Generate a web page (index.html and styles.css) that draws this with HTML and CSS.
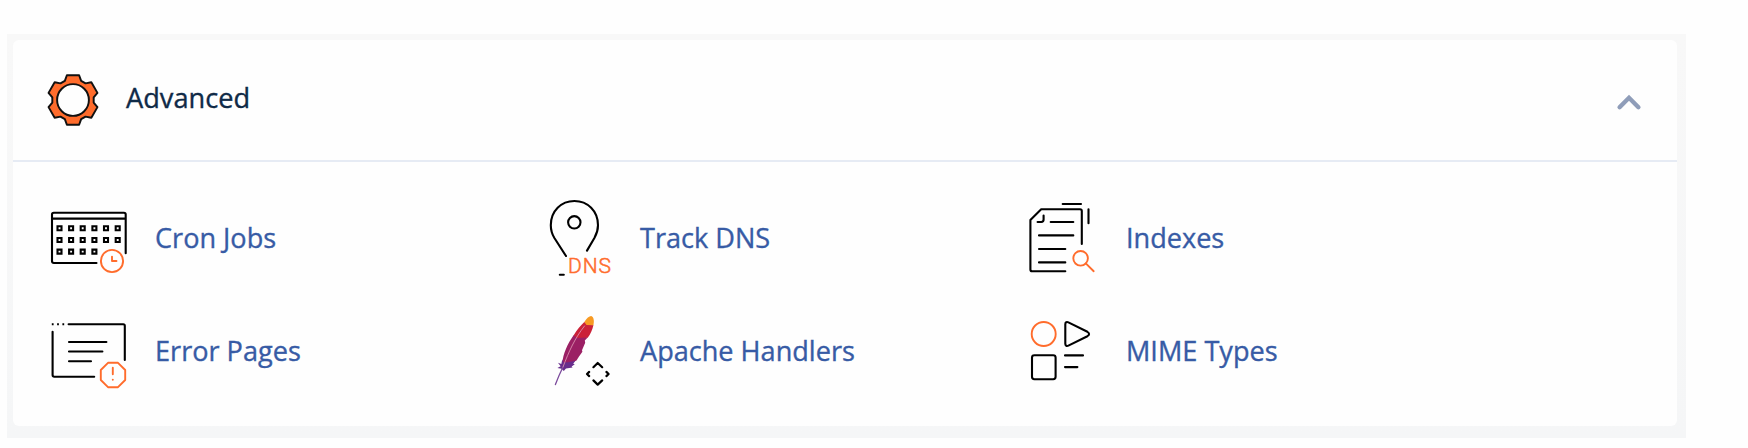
FILE: index.html
```html
<!doctype html>
<html lang="en">

<head>
  <meta charset="utf-8">
  <meta name="viewport" content="width=device-width, initial-scale=1">
  <title>Advanced</title>
  <link rel="stylesheet" href="styles.css">
</head>

<body>
  <div class="wrap">
    <div class="panel">
      <div class="panel-header">
        <svg class="gear" viewBox="-26.5 -26.5 53 53">
          <path d="M-8-18.8L-6-24.3H6L8-18.8L12.3-16.3L18-17.4L24-7L20.3-2.5V2.5L24 7L18 17.4L12.3 16.3L8 18.8L6 24.3H-6L-8 18.8L-12.3 16.3L-18 17.4L-24 7L-20.3 2.5V-2.5L-24-7L-18-17.4L-12.3-16.3Z" />
          <circle r="15.6" />
        </svg>
        <h2>Advanced</h2>
        <svg class="chevron" viewBox="0 0 26 18">
          <path d="M3.6 14.2L13 4.8L22.4 14.2" />
        </svg>
      </div>
      <div class="items">
        <a class="item">
          <svg class="icon" viewBox="0 0 90 90">
            <path d="M80.7 59.3V20.5Q80.7 18.7 78.9 18.7H8.8Q7 18.7 7 20.5V67Q7 69 9 69H51.5M7 24.6H80.7" />
            <g class="days">
              <path d="M12.5 32.3h4v4h-4zM24.1 32.3h4v4h-4zM35.7 32.3h4v4h-4zM47.4 32.3h4v4h-4zM59 32.3h4v4h-4zM70.7 32.3h4v4h-4z" />
              <path d="M12.5 44h4v4h-4zM24.1 44h4v4h-4zM35.7 44h4v4h-4zM47.4 44h4v4h-4zM59 44h4v4h-4zM70.7 44h4v4h-4z" />
              <path d="M12.5 55.6h4v4h-4zM24.1 55.6h4v4h-4zM35.7 55.6h4v4h-4zM47.4 55.6h4v4h-4z" />
            </g>
            <g class="orange">
              <circle cx="67" cy="67" r="11.1" />
              <path d="M67 62.6V67H71.5" />
            </g>
          </svg>
          <span>Cron Jobs</span>
        </a>
        <a class="item">
          <svg class="icon" viewBox="0 0 90 90">
            <path d="M36 62L24.4 44C22 40 20.8 36 20.8 31.2C20.8 17 31.2 7 44.4 7S68 17 68 31.2C68 36 66.6 40 64.4 44L57 56.6M29.8 80.8H33.8" />
            <circle cx="44.3" cy="28.3" r="6.2" />
            <text x="38" y="78.6" textLength="43">DNS</text>
          </svg>
          <span>Track DNS</span>
        </a>
        <a class="item">
          <svg class="icon" viewBox="0 0 90 90">
            <path d="M46.7 10H65M72.5 15.3V29.3M65.8 50V17Q65.8 15.3 64 15.3H25.2L14.4 26V75.5Q14.4 77.3 16.2 77.3H49.3" />
            <path d="M21.6 28H25.3Q27.6 28 27.6 25.6V21.6M34.7 28H57.3M23 41.4H57.3M23 55H49.3M23 68.4H49.3" />
            <g class="orange">
              <circle cx="64.6" cy="64.3" r="7.3" />
              <path d="M69.8 69.4L77.7 77.2" />
            </g>
          </svg>
          <span>Indexes</span>
        </a>
        <a class="item">
          <svg class="icon" viewBox="0 0 90 90">
            <path class="dots" d="M6.8 17.2h1.8M12.1 17.2h1.8M17.4 17.2h1.8" />
            <path d="M23.6 17.2H78.3Q79.8 17.2 79.8 18.8V53M7.6 24.8V68Q7.6 69.7 9.3 69.7H49.2" />
            <path d="M24 35H61.4M24 44.5H57.4M24 54.3H46" />
            <g class="orange">
              <path d="M63 55.8H73L80.2 63V73L73 80.2H63L55.8 73V63ZM67.8 60.8V67.2M67.8 72.6V72.7" />
            </g>
          </svg>
          <span>Error Pages</span>
        </a>
        <a class="item">
          <svg class="icon" viewBox="0 0 90 90">
            <g class="feather">
              <path fill="#f79a23" d="M54.3 15C56.8 11 60 8.6 61.6 9.2C64 10.4 64.2 14 63.4 18.4L55.6 19.4Z" />
              <path fill="#cb2138" d="M54.3 15L56.5 18L63.4 18.2C62.5 22.5 60.5 27 57.7 30.8L46 32L43.7 28.2C47 22.8 50.8 18.4 54.3 15Z" />
              <path fill="#9b2064" d="M43.7 28L47 31L57.7 30.4L54.8 33.4L55.2 35.8L52 43.2L52.4 44.8L49 49.4L46.5 53.5L38 57.5L32.3 56.5C33 46.5 37.5 37 43.7 28Z" />
              <path fill="#682d8c" d="M32.3 52.4L33.6 55.5L38 55.2L45.4 53.8L43.2 56.7L44.8 57.2L41.6 59.4L42.6 60.5L36 61.6L33.8 64L31.5 61.8L27.4 61L30.6 59.2L28 55.8L31.3 57Z" />
              <path class="quill" d="M25.4 77.6Q29 68 33 60" />
              <path class="vein" d="M33 60C39 44 45 31 54.5 19" />
            </g>
            <path class="arrows" d="M63.4 60.2L67.7 56L72.2 60.2M63.4 73.4L67.7 77.6L72.2 73.4M59.2 64.9L57 67L59.2 69.1M76.4 64.9L78.6 67L76.4 69.1" />
          </svg>
          <span>Apache Handlers</span>
        </a>
        <a class="item">
          <svg class="icon" viewBox="0 0 90 90">
            <circle class="orange" cx="27.7" cy="27" r="12" />
            <path d="M49.3 17.2C49.3 15.2 50.8 14.6 52.4 15.4L71.4 24.8C73.6 26 73.6 28 71.4 29.2L52.4 38.6C50.8 39.4 49.3 38.8 49.3 36.8Z" />
            <rect x="16" y="48.2" width="23.6" height="24" rx="2.4" />
            <path d="M49 48.4H67M49 60.1H61.4" />
          </svg>
          <span>MIME Types</span>
        </a>
      </div>
    </div>
  </div>
</body>

</html>
```

FILE: styles.css
```css
body {
  margin: 0;
  padding: 34px 0 0 7px;
  background: #fefefe;
  font: 27.1px "Open Sans", "Noto Sans", sans-serif;
  -webkit-text-stroke: .35px;
}

.wrap {
  box-sizing: border-box;
  width: 1679px;
  height: 404px;
  padding: 6px 9px 12px 6px;
  background: linear-gradient(#f8f8f8, #f5f6f7);
}

.panel {
  height: 386px;
  border-radius: 6px;
  background: #fefefe;
}

.panel-header {
  display: flex;
  align-items: center;
  box-sizing: border-box;
  height: 122px;
  padding: 0 35px 0 33px;
  border-bottom: 2px solid #e6ebf4;
}

.panel-header h2 {
  flex: 1;
  margin: 0 0 6px 26px;
  color: #0f2a47;
  font-size: 27.2px;
  font-weight: 400;
}

.gear {
  width: 54px;
  height: 54px;
  fill: #ff6c2c;
  stroke: #111;
  stroke-width: 1.9;
  stroke-linejoin: round;
}

.gear circle {
  fill: #fefefe;
}

.chevron {
  width: 26px;
  height: 18px;
  margin-top: 4px;
  fill: none;
  stroke: #8f9db9;
  stroke-width: 4.4;
  stroke-linecap: round;
}

/* three columns of tools */
.items {
  display: grid;
  grid-template-columns: 485px 486px 485px;
  grid-auto-rows: 90px;
  row-gap: 23px;
  padding: 32px 0 0 32px;
}

.item {
  display: flex;
  align-items: center;
  color: #375ba5;
}

.item span {
  margin: 0 0 3px 20px;
}

.icon {
  width: 90px;
  height: 90px;
  fill: none;
  stroke: #000;
  stroke-width: 2.1;
  stroke-linecap: round;
  stroke-linejoin: round;
}

.icon .days {
  stroke-width: 2.1;
  stroke-linejoin: miter;
}

.icon .dots {
  stroke-linecap: butt;
}

.icon .orange {
  stroke: #ff6c2c;
  stroke-width: 1.9;
}

.icon text {
  fill: #ff6c2c;
  stroke: #ff6c2c;
  stroke-width: .5;
  font: 300 21px Roboto, sans-serif;
}

.icon .arrows {
  stroke-width: 2.2;
}

.feather {
  stroke: none;
}

.feather .quill {
  stroke: #7b4a9c;
  stroke-width: 1.3;
}

.feather .vein {
  stroke: #d990ae;
  stroke-width: .9;
}
```
